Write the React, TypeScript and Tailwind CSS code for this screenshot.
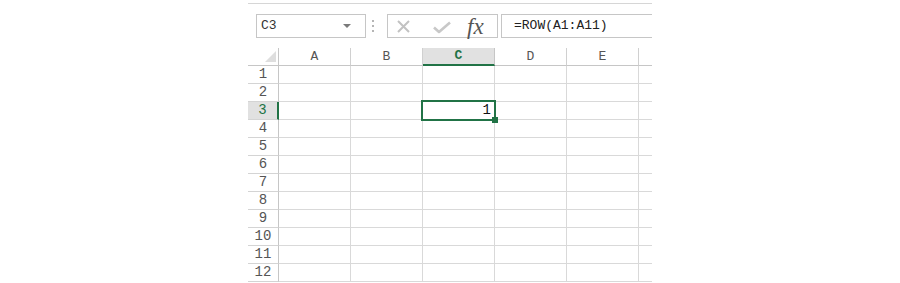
import React from "react";

const cols = ["A", "B", "C", "D", "E"];
const rows = Array.from({ length: 12 }, (_, i) => i + 1);
const mono = { fontFamily: '"Liberation Mono", "DejaVu Sans Mono", monospace' };

export default function App() {
  return (
    <div className="w-[900px] h-[283px] bg-white overflow-hidden text-[13px] text-[#333]" style={mono}>
      <div className="ml-[248px] w-[404px] pt-[3px]">
        <div className="h-px bg-[#d6d6d6]" />
        {/* formula bar */}
        <div className="mt-[10px] flex items-center h-[24px]">
          <div className="ml-[8px] w-[110px] h-[24px] border border-[#c6c6c6] flex items-center justify-between pl-[4px] pr-[14px]">
            <span className="text-[#333]">C3</span>
            <span className="w-0 h-0 border-l-[4px] border-r-[4px] border-t-[4px] border-l-transparent border-r-transparent border-t-[#7a7a7a]" />
          </div>
          <div className="ml-[6px] w-[2px] flex flex-col gap-[3px]">
            <span className="w-[2px] h-[2px] bg-[#b5b5b5]" />
            <span className="w-[2px] h-[2px] bg-[#b5b5b5]" />
            <span className="w-[2px] h-[2px] bg-[#b5b5b5]" />
          </div>
          <div className="ml-[13px] w-[111px] h-[24px] border border-[#c6c6c6] flex items-center pl-[9px]">
            <svg width="13" height="13" viewBox="0 0 13 13">
              <path d="M1 1 L12 12 M12 1 L1 12" stroke="#c2c2c2" strokeWidth="2" fill="none" />
            </svg>
            <svg className="ml-[23px] mt-[3px]" width="18" height="13" viewBox="0 0 18 13">
              <path d="M1 6.5 L6 11 L17 1.5" stroke="#c8c8c8" strokeWidth="2.6" fill="none" strokeLinejoin="round" />
            </svg>
            <span
              className="ml-[16px] italic text-[23px] leading-none text-[#555]"
              style={{ fontFamily: '"Liberation Serif", "DejaVu Serif", serif' }}
            >
              fx
            </span>
          </div>
          <div className="ml-[3px] flex-1 h-[24px] border-t border-b border-l border-[#c6c6c6] flex items-center pl-[12px] text-[#222]">
            =ROW(A1:A11)
          </div>
        </div>
        {/* column header */}
        <div className="mt-[10px] flex h-[18px]">
          <div className="w-[31px] border-r border-b border-[#c6c6c6] relative">
            <svg className="absolute right-[2px] bottom-[3px]" width="11" height="11" viewBox="0 0 11 11">
              <polygon points="11,0 11,11 0,11" fill="#dedede" />
            </svg>
          </div>
          {cols.map((c) => (
            <div
              key={c}
              className={
                c === "C"
                  ? "w-[72px] border-r border-[#c6c6c6] border-b-2 border-b-[#217346] bg-[#e1e1e1] text-[#217346] font-bold flex items-center justify-center"
                  : "w-[72px] border-r border-b border-[#d0d0d0] border-b-[#c6c6c6] flex items-center justify-center text-[#555]"
              }
            >
              {c}
            </div>
          ))}
          <div className="flex-1 border-b border-[#c6c6c6]" />
        </div>
        {/* rows */}
        {rows.map((r) => (
          <div key={r} className="flex h-[18px]">
            <div
              className={
                r === 3
                  ? "w-[31px] border-r-2 border-r-[#217346] border-b border-b-[#d4d4d4] bg-[#e1e1e1] text-[#217346] flex items-center justify-center text-[14px]"
                  : "w-[31px] border-r border-r-[#c6c6c6] border-b border-b-[#d4d4d4] flex items-center justify-center text-[#555] text-[14px]"
              }
            >
              {r}
            </div>
            {cols.map((c) => (
              <div key={c} className="w-[72px] border-r border-b border-[#d9d9d9] relative">
                {r === 3 && c === "C" && (
                  <>
                    <div className="absolute -left-[2px] -top-[2px] w-[75px] h-[21px] border-2 border-[#217346] flex items-center justify-end pr-[3px] text-[14px] text-[#111] z-10">
                      1
                    </div>
                    <div className="absolute left-[69px] top-[15px] w-[6px] h-[6px] bg-[#217346] z-20" />
                  </>
                )}
              </div>
            ))}
            <div className="flex-1 border-b border-[#d9d9d9]" />
          </div>
        ))}
      </div>
    </div>
  );
}
